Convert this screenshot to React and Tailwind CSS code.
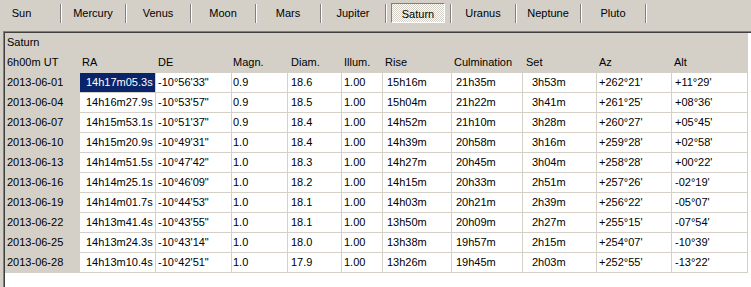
import React from "react";

const planets = ["Sun","Mercury","Venus","Moon","Mars","Jupiter","Saturn","Uranus","Neptune","Pluto"];

const cols = [
  { w: "w-[75px]", hp: "pl-[2px]", dp: "pl-[2px]" },
  { w: "w-[76px]", hp: "pl-[2px]", dp: "pl-[6px]" },
  { w: "w-[76px]", hp: "pl-[2px]", dp: "pl-[2px]" },
  { w: "w-[56px]", hp: "pl-[1px]", dp: "pl-[1px]" },
  { w: "w-[54px]", hp: "pl-[3px]", dp: "pl-[3px]" },
  { w: "w-[41px]", hp: "pl-[2px]", dp: "pl-[2px]" },
  { w: "w-[69px]", hp: "pl-[2px]", dp: "pl-[4px]" },
  { w: "w-[71px]", hp: "pl-[2px]", dp: "pl-[4px]" },
  { w: "w-[74px]", hp: "pl-[3px]", dp: "pl-[9px]" },
  { w: "w-[75px]", hp: "pl-[2px]", dp: "pl-[2px]" },
  { w: "w-[76px]", hp: "pl-[2px]", dp: "pl-[3px]" },
];

const header1 = ["Saturn","","","","","","","","","",""];
const header2 = ["6h00m UT","RA","DE","Magn.","Diam.","Illum.","Rise","Culmination","Set","Az","Alt"];

const rows = [
  ["2013-06-01","14h17m05.3s","-10°56'33\"","0.9","18.6","1.00","15h16m","21h35m","3h53m","+262°21'","+11°29'"],
  ["2013-06-04","14h16m27.9s","-10°53'57\"","0.9","18.5","1.00","15h04m","21h22m","3h41m","+261°25'","+08°36'"],
  ["2013-06-07","14h15m53.1s","-10°51'37\"","0.9","18.4","1.00","14h52m","21h10m","3h28m","+260°27'","+05°45'"],
  ["2013-06-10","14h15m20.9s","-10°49'31\"","1.0","18.4","1.00","14h39m","20h58m","3h16m","+259°28'","+02°58'"],
  ["2013-06-13","14h14m51.5s","-10°47'42\"","1.0","18.3","1.00","14h27m","20h45m","3h04m","+258°28'","+00°22'"],
  ["2013-06-16","14h14m25.1s","-10°46'09\"","1.0","18.2","1.00","14h15m","20h33m","2h51m","+257°26'","-02°19'"],
  ["2013-06-19","14h14m01.7s","-10°44'53\"","1.0","18.1","1.00","14h03m","20h21m","2h39m","+256°22'","-05°07'"],
  ["2013-06-22","14h13m41.4s","-10°43'55\"","1.0","18.1","1.00","13h50m","20h09m","2h27m","+255°15'","-07°54'"],
  ["2013-06-25","14h13m24.3s","-10°43'14\"","1.0","18.0","1.00","13h38m","19h57m","2h15m","+254°07'","-10°39'"],
  ["2013-06-28","14h13m10.4s","-10°42'51\"","1.0","17.9","1.00","13h26m","19h45m","2h03m","+252°55'","-13°22'"],
];

function HeaderRow({ cells }) {
  return (
    <div className="flex">
      {cells.map((c, i) => (
        <div
          key={i}
          className={`${cols[i].w} ${cols[i].hp} h-[20px] shrink-0 border-r border-b border-[#d4d0c8] bg-[#d4d0c8] leading-[19px] whitespace-nowrap overflow-hidden`}
        >
          {c}
        </div>
      ))}
    </div>
  );
}

export default function App() {
  return (
    <div className="w-[751px] h-[287px] overflow-hidden bg-[#d4d0c8] text-black text-[11px] font-['Liberation_Sans',Arial,sans-serif] flex flex-col">
      <div className="flex h-[31px] pl-[1px] shrink-0">
        {planets.map((p) => {
          const pressed = p === "Saturn";
          return (
            <div key={p} className="flex shrink-0">
              <div
                className={
                  pressed
                    ? "w-[54px] h-[20px] mt-[3px] flex items-center justify-center border-t border-l border-[#808080] border-r-white border-b-white border-r border-b bg-[repeating-conic-gradient(#ffffff_0%_25%,#d4d0c8_0%_50%)] bg-[length:2px_2px] pt-[1px] leading-[14px]"
                    : p === "Sun"
                    ? "w-[54px] h-[20px] mt-[3px] flex items-center justify-center pr-[13px] leading-[14px]"
                    : "w-[54px] h-[20px] mt-[3px] flex items-center justify-center leading-[14px]"
                }
              >
                {p}
              </div>
              <div className="w-[2px] h-[19px] mt-[4px] ml-[5px] mr-[4px] border-l border-r border-l-[#808080] border-r-white" />
            </div>
          );
        })}
      </div>
      <div className="ml-[3px] flex-1 border-t border-l border-[#808080] flex flex-col">
        <div className="flex-1 border-t border-l border-[#404040] bg-white">
          <HeaderRow cells={header1} />
          <HeaderRow cells={header2} />
          {rows.map((r, ri) => (
            <div key={ri} className="flex">
              {r.map((c, ci) => {
                const fixed = ci === 0;
                const selected = ri === 0 && ci === 1;
                const bg = fixed
                  ? "bg-[#d4d0c8]"
                  : selected
                  ? "bg-[#0a246a] text-white"
                  : "bg-white";
                return (
                  <div
                    key={ci}
                    className={`${cols[ci].w} ${cols[ci].dp} ${bg} h-[20px] shrink-0 border-r border-b border-[#d4d0c8] leading-[19px] whitespace-nowrap overflow-hidden`}
                  >
                    {c}
                  </div>
                );
              })}
            </div>
          ))}
        </div>
      </div>
    </div>
  );
}
